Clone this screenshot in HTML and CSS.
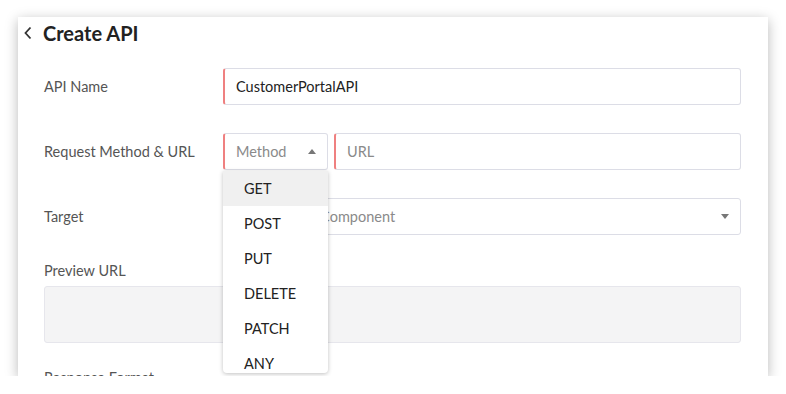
FILE: index.html
```html
<!DOCTYPE html>
<html lang="en">
<head>
    <meta charset="UTF-8">
    <meta name="viewport" content="width=device-width, initial-scale=1.0">
    <title>Create API</title>
    <link rel="stylesheet" href="styles.css">
</head>
<body>
    <div class="page">
        <div class="card">
            <div class="card-header">
                <svg class="back-icon" width="10" height="14" viewBox="0 0 10 14">
                    <path d="M7.5 1.5 L2.5 7 L7.5 12.5" fill="none" stroke="#333" stroke-width="1.8"/>
                </svg>
                <div class="card-title">Create API</div>
            </div>

            <div class="form">
                <div class="form-row">
                    <label class="form-label">API Name</label>
                    <div class="field field-required">CustomerPortalAPI</div>
                </div>

                <div class="form-row">
                    <label class="form-label">Request Method &amp; URL</label>
                    <div class="field-group">
                        <div class="select-wrap">
                            <div class="field field-required field-select placeholder">
                                Method
                                <span class="caret caret-up"></span>
                            </div>
                            <ul class="dropdown">
                                <li class="active">GET</li>
                                <li>POST</li>
                                <li>PUT</li>
                                <li>DELETE</li>
                                <li>PATCH</li>
                                <li>ANY</li>
                            </ul>
                        </div>
                        <div class="field field-required field-url placeholder">URL</div>
                    </div>
                </div>

                <div class="form-row">
                    <label class="form-label">Target</label>
                    <div class="field field-select placeholder">
                        Select Target Component
                        <span class="caret caret-down"></span>
                    </div>
                </div>

                <div class="form-stack">
                    <label class="form-label">Preview URL</label>
                    <div class="preview-box"></div>
                </div>

                <div class="form-stack">
                    <label class="form-label">Response Format</label>
                </div>
            </div>
        </div>
    </div>
</body>
</html>
```

FILE: styles.css
```css
body {
    margin: 0;
    padding: 0;
    background: #fff;
    font-family: 'Lato', 'Open Sans', sans-serif;
    color: #222;
    overflow: hidden;
}

.page {
    padding: 17px 18px 0;
}

.card {
    width: 750px;
    height: 359px;
    background: #fff;
    box-shadow: 0 3px 12px rgba(0, 0, 0, 0.28);
    overflow: hidden;
}

.card-header {
    display: flex;
    align-items: center;
    height: 32px;
    padding-left: 5px;
}

.back-icon {
    display: block;
    margin-right: 10px;
}

.card-title {
    font-size: 20px;
    font-weight: bold;
    color: #222;
}

.form {
    padding: 19px 27px 0 26px;
}

.form-row {
    display: flex;
    align-items: center;
    margin-bottom: 28px;
}

.form-label {
    width: 179px;
    flex-shrink: 0;
    font-size: 14.5px;
    color: #555;
}

.field {
    flex: 1;
    box-sizing: border-box;
    height: 37px;
    border: 1px solid #dcdde6;
    border-radius: 3px;
    padding: 0 11px;
    display: flex;
    align-items: center;
    font-size: 14.5px;
    color: #222;
    background: #fff;
}

.field-required {
    border-left: 2px solid #ef8080;
}

.placeholder {
    color: #8a8a8a;
}

.field-group {
    flex: 1;
    display: flex;
    gap: 6px;
}

.select-wrap {
    position: relative;
    width: 105px;
}

.field-select {
    position: relative;
    justify-content: space-between;
}

.select-wrap .field {
    width: 105px;
}

.caret {
    width: 0;
    height: 0;
    border-left: 4px solid transparent;
    border-right: 4px solid transparent;
}

.caret-up {
    border-bottom: 5px solid #777;
}

.caret-down {
    border-top: 5px solid #777;
}

.dropdown {
    position: absolute;
    top: 38px;
    left: 0;
    width: 105px;
    height: 202px;
    margin: 0;
    padding: 0;
    list-style: none;
    background: #fff;
    border-radius: 0 0 4px 4px;
    box-shadow: 0 1px 4px rgba(0, 0, 0, 0.25);
    overflow: hidden;
    z-index: 5;
}

.dropdown li {
    height: 35px;
    line-height: 35px;
    padding-left: 21px;
    font-size: 14.5px;
    color: #222;
}

.dropdown li.active {
    background: #f0f0f0;
}

.form-stack {
    display: flex;
    flex-direction: column;
    margin-top: -1px;
}

.form-stack .form-label {
    width: auto;
    margin-bottom: 7px;
}

.preview-box {
    height: 57px;
    box-sizing: border-box;
    background: #f4f4f5;
    border: 1px solid #e6e6ec;
    border-radius: 3px;
    margin-bottom: 27px;
}
```
